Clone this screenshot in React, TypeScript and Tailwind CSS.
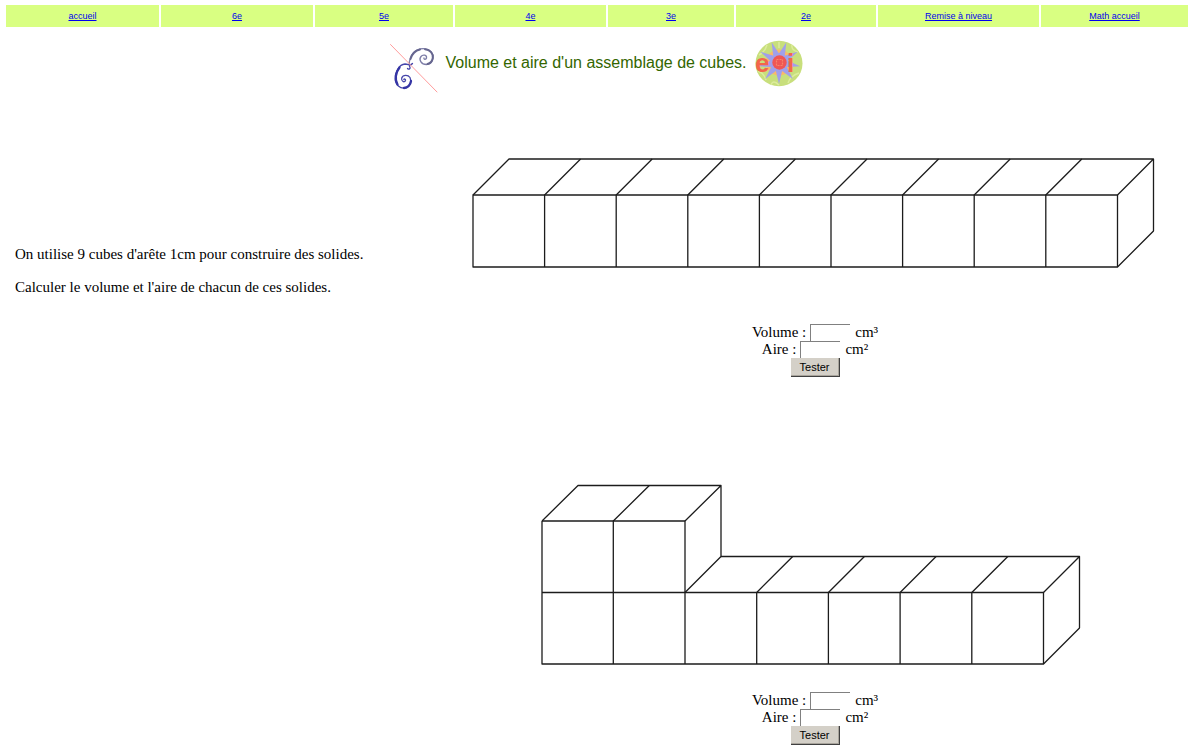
import React, { useState } from "react";

const LINKS = ["accueil", "6e", "5e", "4e", "3e", "2e", "Remise à niveau", "Math accueil"];

function SixthGradeLogo() {
  return (
    <svg width="50" height="51" viewBox="0 0 50 51" fill="none" strokeLinecap="round" aria-hidden="true">
      <path
        d="M20.500 23 C19.500 18 22 10 28 7 C33 4.800 40 5 43 10 C45.500 15 43 21 37.500 21.500 C32 21.500 29.500 16.500 32 13.500 C34 11 38 12 37.500 15 C37 17 34.500 16.500 35 15"
        stroke="#7c7ca6"
        strokeWidth="1.300"
      />
      <path d="M21.500 16 C23 11 26.500 7.500 31 6.500 M36 6.200 C41 6.800 44.500 10.500 43.800 15 C43.300 18 41 20.500 38.500 21" stroke="#66668f" strokeWidth="2" />
      <path
        d="M23.500 20.500 C21 23.500 20 21 16 21 C10 21.500 6 29 6.200 36 C6.500 42 11 45.800 16 45 C21 44 23 38.500 21 34.500 C19 31.500 14 31.500 12.700 35 C12 38.500 15.500 40 16.500 37.500 C16.800 36 15 35.500 14.800 36.500"
        stroke="#4545aa"
        strokeWidth="1.300"
      />
      <path d="M10.500 24.500 C6.500 29.500 5.500 36.500 8.500 41.500 M22 38 C21.500 42 18.500 44.800 15 45" stroke="#3535a5" strokeWidth="2.300" />
      <path d="M20.500 23 C22 25.500 20 27 18.500 25.500" stroke="#4545aa" strokeWidth="1.300" />
      <path d="M1.500 1.500 L48 49" stroke="#ff9c9c" strokeWidth="1" />
    </svg>
  );
}

function EoiLogo() {
  const rays = [20, 60, 100, 140, 180, 220, 260, 300, 340];
  return (
    <svg width="48" height="47" viewBox="0 0 48 47" aria-hidden="true">
      <ellipse cx="24" cy="23.500" rx="23.500" ry="22.800" fill="#c8df7c" />
      <path d="M4 15 Q10 12 12 5 M24 2 V8 M37 5 Q36 10 43 12 M3 31 Q9 33 11 40 M16 45 Q18 39 24 45 M33 43 Q35 36 44 33" stroke="#dcec9c" strokeWidth="1.500" fill="none" />
      <circle cx="24" cy="22.500" r="13" fill="#fbb968" />
      {rays.map((a) => (
        <path key={a} d="M24 1 L27.600 16 L20.400 16 Z" fill="#a0a0ea" transform={`rotate(${a} 24 22.500)`} />
      ))}
      <circle cx="24" cy="22.500" r="9" fill="#a0a0ea" />
      <circle cx="24.500" cy="22.500" r="7.200" fill="#ef5654" />
      <rect x="21.500" y="19.500" width="6" height="6" fill="none" stroke="#f68468" strokeWidth="1.200" strokeDasharray="2 1" />
      <g fill="#f4664a" fontFamily="Liberation Sans, Arial, sans-serif" fontWeight="bold" fontSize="26">
        <text x="0" y="32">e</text>
        <text x="32" y="32">i</text>
      </g>
    </svg>
  );
}

function LongBar() {
  return (
    <svg viewBox="0 0 686 112" className="block w-full max-w-[686px]" fill="none" stroke="#1c1c1c" strokeWidth="1.300" strokeLinejoin="round" role="img" aria-label="9 cubes">
      <path d="M1 38 H645.500 V110 H1 Z" />
      <path d="M1 38 L37 2 H681.500 L645.500 38" />
      <path d="M681.500 2 V74 L645.500 110" />
      {[1, 2, 3, 4, 5, 6, 7, 8].map((i) => (
        <path key={i} d={`M${1 + i * 71.6} 110 V38 l36 -36`} />
      ))}
    </svg>
  );
}

function StepShape() {
  return (
    <svg viewBox="0 0 548 182" className="block w-full max-w-[548px]" fill="none" stroke="#1c1c1c" strokeWidth="1.300" strokeLinejoin="round" role="img" aria-label="9 cubes">
      <path d="M1 37 H144 V180 M1 37 V180 H502.500 V108.500 H1" />
      <path d="M1 37 L37 1.500 H180 L144 37 M180 1.500 V72.500 L144 108.500" />
      <path d="M180 72.500 H538.500 L502.500 108.500 M538.500 72.500 V144 L502.500 180" />
      <path d="M72.300 180 V37 L108.300 1.500" />
      {[1, 2, 3, 4].map((i) => (
        <path key={i} d={`M${144 + i * 71.7} 180 V108.500 l36 -36`} />
      ))}
    </svg>
  );
}

function Field({ id, label, unit }: { id: string; label: string; unit: string }) {
  const [value, setValue] = useState("");
  return (
    <div className="flex h-[17px] items-center justify-center">
      <label htmlFor={id} className="mr-1">{label} :</label>
      <input
        id={id}
        value={value}
        onChange={(e) => setValue(e.target.value)}
        className="mr-[5px] h-[17px] w-10 border-t border-l border-[#808080] bg-white text-[13px] outline-none"
      />
      <span>{unit}</span>
    </div>
  );
}

function AnswerForm({ name }: { name: string }) {
  return (
    <form className="flex flex-col items-center" onSubmit={(e) => e.preventDefault()}>
      <Field id={`${name}-volume`} label="Volume" unit="cm³" />
      <Field id={`${name}-aire`} label="Aire" unit="cm²" />
      <button
        type="submit"
        className="h-[19px] w-[49px] border-r border-b border-[#404040] bg-[#d4d0c8] font-['Liberation_Sans',Arial,sans-serif] text-[11px] leading-4 shadow-[inset_-1px_-1px_0_#a8a49c]"
      >
        Tester
      </button>
    </form>
  );
}

export default function App() {
  return (
    <div className="bg-white pb-2 font-['Liberation_Serif','Times_New_Roman',serif] text-[15px] leading-[17px] text-black">
      <nav className="grid grid-cols-[153fr_152fr_138fr_151fr_126fr_140fr_161fr_147fr] gap-0.5 pt-[5px] pr-1 pl-1.5 font-['Liberation_Sans',Arial,sans-serif] text-[9px]">
        {LINKS.map((text) => (
          <div key={text} className="flex h-[22px] items-center justify-center bg-[#d9ff82]">
            <a href="#" className="text-[#0000ee] underline">{text}</a>
          </div>
        ))}
      </nav>
      <header className="flex items-start justify-center pt-[13px]">
        <div className="pt-[3px]"><SixthGradeLogo /></div>
        <h1 className="px-2 pt-[13px] pl-1.5 font-['Liberation_Sans',Arial,sans-serif] text-[16px] leading-5 text-[#336600]">
          Volume et aire d'un assemblage de cubes.
        </h1>
        <EoiLogo />
      </header>
      <main className="grid grid-cols-[438fr_754fr]">
        <section className="flex flex-col gap-4 pt-[152px] pl-[15px]">
          <p>On utilise 9 cubes d'arête 1cm pour construire des solides.</p>
          <p>Calculer le volume et l'aire de chacun de ces solides.</p>
        </section>
        <div className="flex flex-col items-center gap-[107px] pt-[63px]">
          <section className="flex w-full flex-col items-center gap-[55px]">
            <LongBar />
            <AnswerForm name="barre" />
          </section>
          <section className="flex w-full flex-col items-center gap-[26px]">
            <StepShape />
            <AnswerForm name="marche" />
          </section>
        </div>
      </main>
    </div>
  );
}
